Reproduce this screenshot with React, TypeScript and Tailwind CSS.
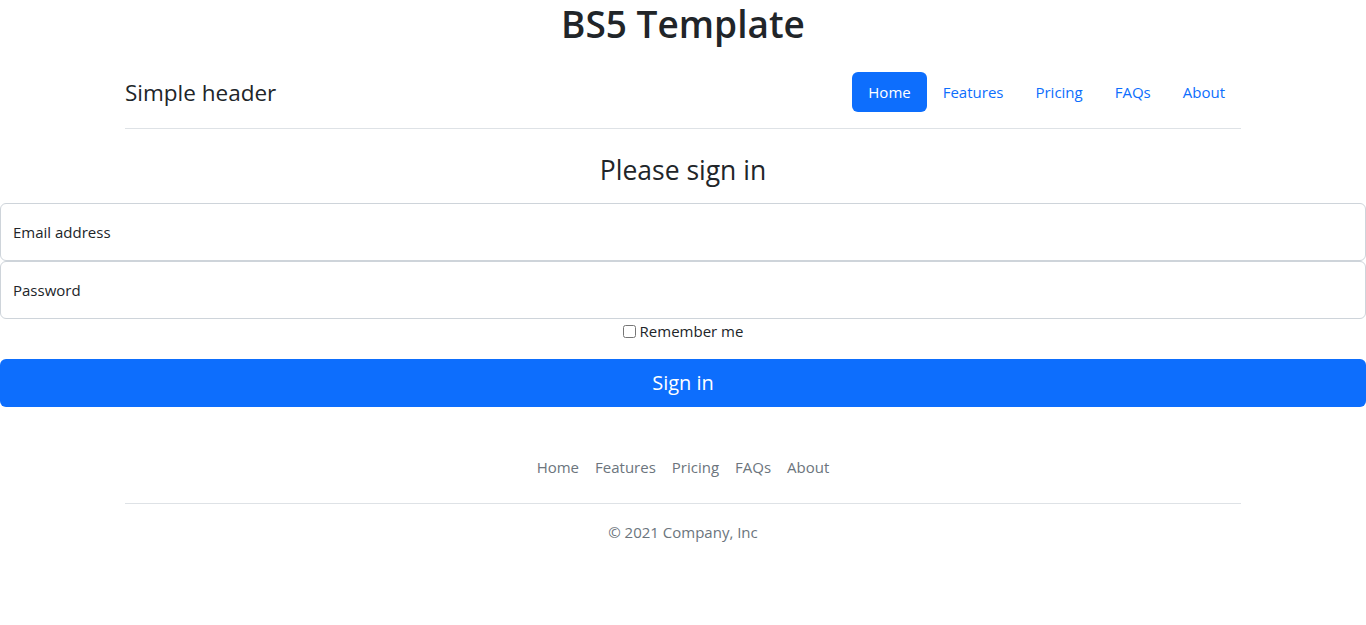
export default function App() {
  const nav = ['Features', 'Pricing', 'FAQs', 'About'];
  return (
    <div className="min-h-screen bg-white text-[#212529] text-[15px] font-['Open_Sans','Noto_Sans',sans-serif]">
      {/* Page title */}
      <h1 className="text-center text-[37px] leading-[48px] font-semibold mb-2">BS5 Template</h1>

      {/* Header */}
      <div className="mx-auto w-[1116px]">
        <header className="flex items-center justify-between py-4 mb-6 border-b border-[#dee2e6]">
          <span className="text-[22.5px] leading-[29px]">Simple header</span>
          <ul className="flex">
            <li>
              <a href="#" className="block px-4 py-2 leading-6 rounded-md bg-[#0d6efd] text-white">Home</a>
            </li>
            {nav.map((n) => (
              <li key={n}>
                <a href="#" className="block px-4 py-2 leading-6 text-[#0d6efd]">{n}</a>
              </li>
            ))}
          </ul>
        </header>
      </div>

      {/* Sign in form */}
      <main className="text-center">
        <h3 className="text-[26.5px] leading-[34px] mb-4">Please sign in</h3>
        <div className="h-[58px] border border-[#ced4da] rounded-md text-left px-3 flex items-center">
          <span className="leading-6">Email address</span>
        </div>
        <div className="h-[58px] border border-[#ced4da] rounded-md text-left px-3 flex items-center">
          <span className="leading-6">Password</span>
        </div>
        <div className="mb-4 flex items-center justify-center h-6">
          <label className="flex items-center leading-6">
            <input type="checkbox" className="w-[13px] h-[13px] mr-[4px]" />
            Remember me
          </label>
        </div>
        <button className="w-full h-12 rounded-md bg-[#0d6efd] text-white text-[20px] leading-[30px]">Sign in</button>
      </main>

      {/* Footer */}
      <div className="mx-auto w-[1116px]">
        <footer className="py-4 my-6">
          <ul className="flex justify-center border-b border-[#dee2e6] pb-4 mb-4">
            {['Home', ...nav].map((n) => (
              <li key={n}>
                <a href="#" className="block px-2 py-2 leading-6 text-[#6c757d]">{n}</a>
              </li>
            ))}
          </ul>
          <p className="text-center text-[#6c757d] leading-6">© 2021 Company, Inc</p>
        </footer>
      </div>
    </div>
  );
}
